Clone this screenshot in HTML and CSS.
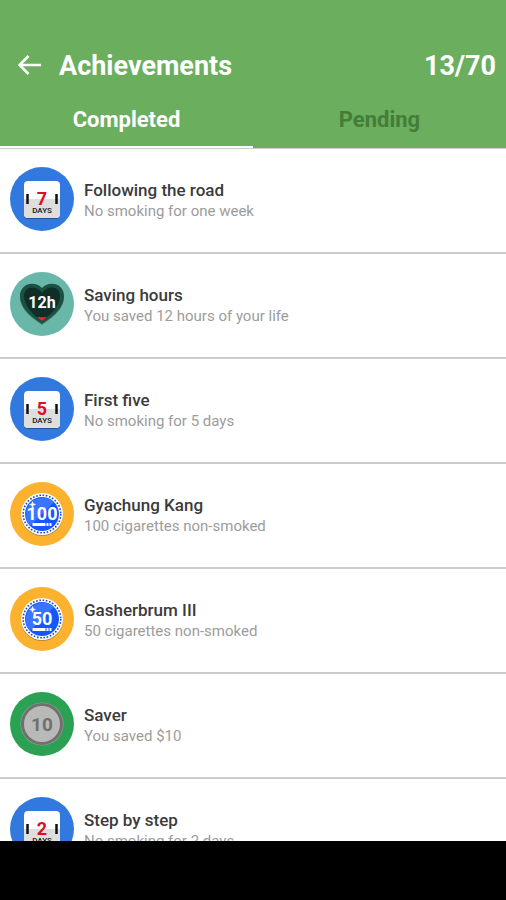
FILE: index.html
```html
<!DOCTYPE html>
<html lang="en">
<head>
<meta charset="utf-8">
<meta name="viewport" content="width=device-width, initial-scale=1">
<title>Achievements</title>
<link rel="stylesheet" href="styles.css">
</head>
<body>
<svg class="defs" aria-hidden="true">
  <defs>
    <g id="calendar">
      <circle cx="32" cy="32" r="32" fill="#3179de"/>
      <rect x="14" y="15" width="36" height="37" rx="4" fill="#1f559f"/>
      <rect x="14" y="14" width="36" height="37" rx="4" fill="#fdfdfd"/>
      <path d="M14 32H50V47a4 4 0 0 1-4 4H18a4 4 0 0 1-4-4Z" fill="#dedede"/>
      <path d="M17.500 27v10M46.500 27v10" stroke="#111" stroke-width="2.500"/>
    </g>
    <g id="coin">
      <circle cx="32" cy="32" r="32" fill="#fdb22f"/>
      <circle cx="32" cy="33" r="21" fill="#b88735"/>
      <circle cx="32" cy="32" r="21" fill="#fff"/>
      <circle cx="32" cy="32" r="18.800" fill="none" stroke="#174fc4" stroke-width="1.600" stroke-dasharray="1.650 1.631"/>
      <circle cx="32" cy="32" r="17" fill="#1557ff"/>
      <path d="M20 44A17 17 0 0 1 44 20Z" fill="#3b75ff"/>
      <path d="M22.500 19.500l.8 2.200 2.200.8-2.200.8-.8 2.200-.8-2.200-2.200-.8 2.200-.8Z" fill="#fff" stroke="#fff" stroke-width=".5"/>
      <path d="M22.500 42.500h13M36.500 42.500h2M39.500 42.500h2" stroke="#fff" stroke-width="3"/>
    </g>
  </defs>
</svg>
<div class="screen">
  <header class="header">
    <div class="bar">
      <button class="back" type="button" aria-label="Back">
        <svg viewBox="0 0 24 20" width="24" height="20" fill="none" stroke="#fff" stroke-width="2.600"><path d="M23 10H1.500M10.500 1L1.500 10l9 9"/></svg>
      </button>
      <h1 class="title">Achievements</h1>
      <span class="count">13/70</span>
    </div>
    <nav class="tabs">
      <button class="tab tab-active" type="button">Completed</button>
      <button class="tab" type="button">Pending</button>
    </nav>
  </header>
  <ul class="list">
    <li class="row">
      <svg class="badge" viewBox="0 0 64 64"><use href="#calendar"/><text class="day" x="32" y="38">7</text><text class="days" x="32" y="46">DAYS</text></svg>
      <div class="text"><h2 class="name">Following the road</h2><p class="note">No smoking for one week</p></div>
    </li>
    <li class="row">
      <svg class="badge" viewBox="0 0 64 64">
        <circle cx="32" cy="32" r="32" fill="#68b7a8"/>
        <path d="M32 53C25 48 10 39 10 25c0-12 14-17 22-8 8-9 22-4 22 8 0 14-15 23-22 28Z" fill="#468b7d"/>
        <path d="M32 52C25 47 10 38 10 24c0-12 14-16 22-8 8-8 22-4 22 8 0 14-15 23-22 28Z" fill="#1c5043"/>
        <path d="M32 49C25 44 14 35 14 24c0-9 11-12 18-3 7-9 18-6 18 3 0 11-11 20-18 25Z" fill="#112d27"/>
        <path d="M27.500 45.500l1.500-.8 1.500.8 1.500-.8 1.500.8 1.500-.8 1.500.8-4.500 3.500Z" fill="#e12b31"/>
        <text class="hours" x="32" y="36">12h</text>
      </svg>
      <div class="text"><h2 class="name">Saving hours</h2><p class="note">You saved 12 hours of your life</p></div>
    </li>
    <li class="row">
      <svg class="badge" viewBox="0 0 64 64"><use href="#calendar"/><text class="day" x="32" y="38">5</text><text class="days" x="32" y="46">DAYS</text></svg>
      <div class="text"><h2 class="name">First five</h2><p class="note">No smoking for 5 days</p></div>
    </li>
    <li class="row">
      <svg class="badge" viewBox="0 0 64 64"><use href="#coin"/><text class="amount" x="32" y="38">100</text></svg>
      <div class="text"><h2 class="name">Gyachung Kang</h2><p class="note">100 cigarettes non-smoked</p></div>
    </li>
    <li class="row">
      <svg class="badge" viewBox="0 0 64 64"><use href="#coin"/><text class="amount" x="32" y="38">50</text></svg>
      <div class="text"><h2 class="name">Gasherbrum III</h2><p class="note">50 cigarettes non-smoked</p></div>
    </li>
    <li class="row">
      <svg class="badge" viewBox="0 0 64 64">
        <circle cx="32" cy="32" r="32" fill="#2aa153"/>
        <circle cx="32" cy="32" r="21.500" fill="#a0a39e"/>
        <circle cx="32" cy="32" r="19.500" fill="#b9b9b8" stroke="#70706f" stroke-width="3"/>
        <text class="cash" x="32" y="39">10</text>
      </svg>
      <div class="text"><h2 class="name">Saver</h2><p class="note">You saved $10</p></div>
    </li>
    <li class="row">
      <svg class="badge" viewBox="0 0 64 64"><use href="#calendar"/><text class="day" x="32" y="38">2</text><text class="days" x="32" y="46">DAYS</text></svg>
      <div class="text"><h2 class="name">Step by step</h2><p class="note">No smoking for 2 days</p></div>
    </li>
  </ul>
  <footer class="system"></footer>
</div>
</body>
</html>
```
FILE: styles.css
```css
* { box-sizing: border-box; }
body { margin: 0; background: #fff; font-family: Roboto, sans-serif; }
h1, h2, p, ul { margin: 0; padding: 0; }
button { padding: 0; border: 0; background: none; font: inherit; color: inherit; cursor: pointer; }
.defs { position: absolute; width: 0; height: 0; }
.screen { display: flex; flex-direction: column; height: 100vh; overflow: hidden; }
.header { flex: none; padding-top: 40px; background: #6aae5e; color: #fff; }
.bar { display: flex; align-items: center; height: 50px; padding: 0 10px 0 18px; }
.back { display: flex; margin-right: 17px; }
.title { flex: 1; padding-top: 2px; font-size: 27px; line-height: 32px; font-weight: 700; }
.count { padding-top: 2px; font-size: 27px; line-height: 32px; font-weight: 700; }
.tabs { display: flex; }
.tab { flex: 1; height: 58px; padding-top: 2px; border-bottom: 2px solid transparent; font-size: 22px; font-weight: 700; color: #437d38; }
.tab-active { border-color: #fff; color: #fff; }
.list { flex: 1; min-height: 0; overflow: hidden; list-style: none; border-top: 1px solid #ccc; }
.row { display: flex; gap: 10px; height: 105px; padding: 18px 10px 0; border-bottom: 2px solid #ccc; }
.badge { flex: none; width: 64px; height: 64px; text-anchor: middle; font-weight: 700; }
.text { padding-top: 12px; }
.name { font-size: 17px; line-height: 22px; font-weight: 500; color: #3b3b3b; }
.note { font-size: 15px; line-height: 20px; color: #9c9c9c; }
.day { font-size: 18px; fill: #e20b24; }
.days { font-size: 8px; font-weight: 500; fill: #111; }
.hours { font-size: 16px; fill: #fff; }
.amount { font-size: 18px; fill: #fff; }
.cash { font-size: 19px; fill: #70706f; }
.system { flex: none; height: 59px; background: #000; }
```
